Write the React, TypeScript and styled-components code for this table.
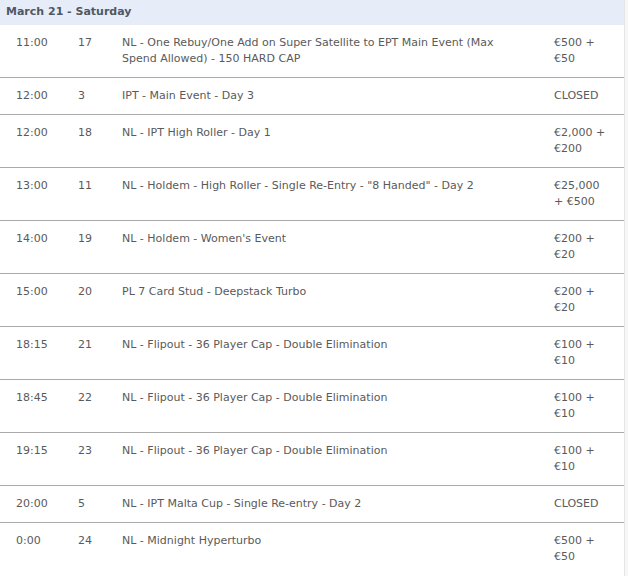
import styled, { createGlobalStyle } from "styled-components";

type EventRow = {
  time: string;
  num: string;
  name: string;
  price: string;
};

const events: EventRow[] = [
  {
    time: "11:00",
    num: "17",
    name: "NL - One Rebuy/One Add on Super Satellite to EPT Main Event (Max Spend Allowed) - 150 HARD CAP",
    price: "€500 + €50",
  },
  { time: "12:00", num: "3", name: "IPT - Main Event - Day 3", price: "CLOSED" },
  { time: "12:00", num: "18", name: "NL - IPT High Roller - Day 1", price: "€2,000 + €200" },
  {
    time: "13:00",
    num: "11",
    name: 'NL - Holdem - High Roller - Single Re-Entry - "8 Handed" - Day 2',
    price: "€25,000 + €500",
  },
  { time: "14:00", num: "19", name: "NL - Holdem - Women's Event", price: "€200 + €20" },
  { time: "15:00", num: "20", name: "PL 7 Card Stud - Deepstack Turbo", price: "€200 + €20" },
  { time: "18:15", num: "21", name: "NL - Flipout - 36 Player Cap - Double Elimination", price: "€100 + €10" },
  { time: "18:45", num: "22", name: "NL - Flipout - 36 Player Cap - Double Elimination", price: "€100 + €10" },
  { time: "19:15", num: "23", name: "NL - Flipout - 36 Player Cap - Double Elimination", price: "€100 + €10" },
  { time: "20:00", num: "5", name: "NL - IPT Malta Cup - Single Re-entry - Day 2", price: "CLOSED" },
  { time: "0:00", num: "24", name: "NL - Midnight Hyperturbo", price: "€500 + €50" },
];

const GlobalStyle = createGlobalStyle`
  body {
    margin: 0;
    background: #f7f7f7;
    font-family: "DejaVu Sans", Verdana, sans-serif;
  }
`;

export default function App() {
  return (
    <>
      <GlobalStyle />
      <Schedule>
        <DayHeader>March 21 - Saturday</DayHeader>
        {events.map((e, i) => (
          <Row key={i} $last={i === events.length - 1}>
            <Time>{e.time}</Time>
            <Num>{e.num}</Num>
            <Name>{e.name}</Name>
            <Price>{e.price}</Price>
          </Row>
        ))}
      </Schedule>
    </>
  );
}

const Schedule = styled.div`
  width: 624px;
  background: #fff;
  border-right: 1px solid #e4e4e4;
  height: 576px;
  overflow: hidden;
`;

const DayHeader = styled.div`
  height: 25px;
  line-height: 24px;
  padding-left: 6px;
  background: #e7edf8;
  color: #4f5864;
  font-size: 11px;
  font-weight: bold;
`;

const Row = styled.div<{ $last: boolean }>`
  display: grid;
  grid-template-columns: 78px 44px 432px 1fr;
  padding: 10px 0;
  border-bottom: 1px solid ${(p) => (p.$last ? "transparent" : "#aaaaaa")};
  font-size: 11px;
  line-height: 16px;
  color: #5a5a5a;
`;

const Time = styled.div`
  padding-left: 16px;
`;

const Num = styled.div``;

const Name = styled.div`
  padding-right: 36px;
`;

const Price = styled.div`
  padding-right: 16px;
`;
